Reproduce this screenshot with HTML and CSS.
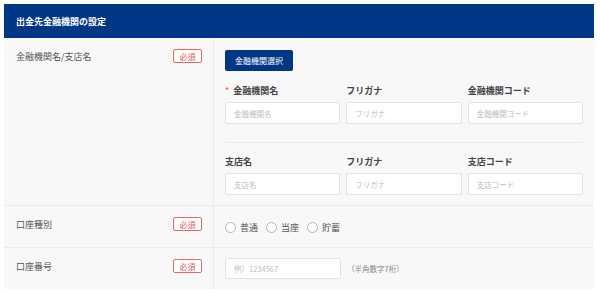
FILE: index.html
```html
<!DOCTYPE html>
<html lang="ja">
<head>
<meta charset="utf-8">
<title>出金先金融機関の設定</title>
<link rel="stylesheet" href="styles.css">
</head>
<body>
<div class="panel">
  <div class="panel-head">出金先金融機関の設定</div>

  <div class="row">
    <div class="row-label"><span>金融機関名/支店名</span><span class="badge">必須</span></div>
    <div class="row-body row-bank">
      <div><button class="btn" type="button">金融機関選択</button></div>
      <div class="fields">
        <div class="field"><div class="field-label"><span class="req">*</span>金融機関名</div><input class="input" placeholder="金融機関名"></div>
        <div class="field"><div class="field-label">フリガナ</div><input class="input" placeholder="フリガナ"></div>
        <div class="field"><div class="field-label">金融機関コード</div><input class="input" placeholder="金融機関コード"></div>
      </div>
      <div class="sep"></div>
      <div class="fields fields-branch">
        <div class="field"><div class="field-label">支店名</div><input class="input" placeholder="支店名"></div>
        <div class="field"><div class="field-label">フリガナ</div><input class="input" placeholder="フリガナ"></div>
        <div class="field"><div class="field-label">支店コード</div><input class="input" placeholder="支店コード"></div>
      </div>
    </div>
  </div>

  <div class="row row-short">
    <div class="row-label"><span>口座種別</span><span class="badge">必須</span></div>
    <div class="row-body row-center">
      <div class="radios">
        <label class="radio"><span class="radio-dot"></span>普通</label>
        <label class="radio"><span class="radio-dot"></span>当座</label>
        <label class="radio"><span class="radio-dot"></span>貯蓄</label>
      </div>
    </div>
  </div>

  <div class="row row-short">
    <div class="row-label"><span>口座番号</span><span class="badge">必須</span></div>
    <div class="row-body row-center">
      <div class="acct">
        <input class="input input-acct" placeholder="例）1234567">
        <span class="hint">（半角数字7桁）</span>
      </div>
    </div>
  </div>
</div>
</body>
</html>
```

FILE: styles.css
```css
* { box-sizing: border-box; }
html, body { background: #ffffff; }
body {
  margin: 4px;
  font-family: "Noto Sans CJK JP", "Noto Sans", sans-serif;
  color: #555;
}
.panel {
  width: 590px;
  background: #f8f8f8;
}
.panel-head {
  height: 34px;
  background: #003686;
  color: #fff;
  font-size: 9px;
  font-weight: 700;
  display: flex;
  align-items: center;
  padding-left: 12px;
}
.row {
  display: grid;
  grid-template-columns: 209px 1fr;
  border-top: 1px solid #ececec;
}
.row:nth-child(2) { border-top: none; }
.row-short { height: 42px; }
.row-label {
  display: flex;
  justify-content: space-between;
  align-items: center;
  height: 14px;
  margin-top: 11px;
  padding: 0 11px 0 12px;
  font-size: 9px;
  color: #555;
}
.badge {
  width: 29px;
  height: 14px;
  border: 1px solid #e46767;
  border-radius: 2px;
  background: #fff;
  color: #e05555;
  font-size: 8px;
  display: flex;
  align-items: center;
  justify-content: center;
}
.row-body {
  border-left: 1px solid #ececec;
  padding: 0 11px;
}
.row-bank { padding-top: 12px; padding-bottom: 10px; }
.row-center { display: flex; align-items: center; }
.btn {
  width: 68px;
  height: 21px;
  border: none;
  border-radius: 2px;
  background: #003686;
  color: #fff;
  font-family: inherit;
  font-size: 8px;
  padding: 0;
  display: block;
}
.fields {
  display: grid;
  grid-template-columns: repeat(3, 1fr);
  column-gap: 6px;
  margin-top: 14px;
}
.fields-branch { margin-top: 13px; }
.field { display: flex; flex-direction: column; }
.field-label {
  font-size: 9px;
  line-height: 12px;
  font-weight: 700;
  color: #444;
  margin-bottom: 5px;
}
.req { color: #e05555; margin-right: 4px; font-weight: 400; }
.input {
  width: 100%;
  height: 22px;
  border: 1px solid #e3e3e3;
  border-radius: 2px;
  background: #fff;
  padding: 0 8px;
  font-family: inherit;
  font-size: 7.5px;
  color: #444;
  outline: none;
}
.input::placeholder { color: #bdbdbd; }
.sep {
  height: 1px;
  background: #ebebeb;
  margin-top: 18px;
}
.radios { display: flex; align-items: center; gap: 8px; margin-top: 2px; }
.radio {
  display: flex;
  align-items: center;
  gap: 4px;
  font-size: 9px;
  color: #555;
}
.radio-dot {
  width: 11px;
  height: 11px;
  border: 1px solid #b5b5b5;
  border-radius: 50%;
  background: #fff;
}
.acct { display: flex; align-items: center; gap: 6px; }
.input-acct { width: 116px; height: 21px; }
.hint { font-size: 7.5px; color: #888; }
```
